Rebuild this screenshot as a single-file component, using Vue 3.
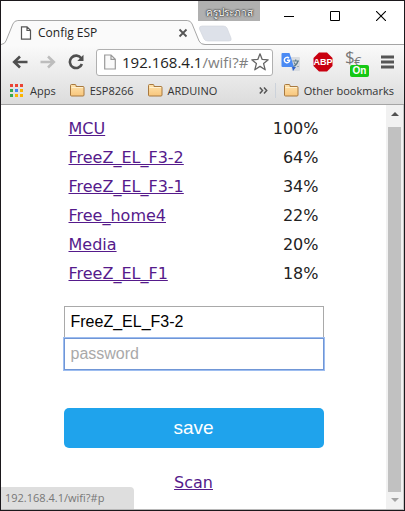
<script setup>
import { ref } from 'vue'

const networks = [
  { name: 'MCU', signal: 100 },
  { name: 'FreeZ_EL_F3-2', signal: 64 },
  { name: 'FreeZ_EL_F3-1', signal: 34 },
  { name: 'Free_home4', signal: 22 },
  { name: 'Media', signal: 20 },
  { name: 'FreeZ_EL_F1', signal: 18 },
]
const appColors = ['#ea4335', '#ea4335', '#ea4335', '#34a853', '#4285f4', '#fbb400', '#34a853', '#fbb400', '#fbb400']
const folders = ['ESP8266', 'ARDUINO']
const ssid = ref('FreeZ_EL_F3-2')
const password = ref('')
</script>

<template>
  <div class="window">
    <svg class="defs" aria-hidden="true">
      <defs>
        <linearGradient id="folder-fill" x1="0" y1="0" x2="0" y2="1">
          <stop offset="0" stop-color="#fee2ac" />
          <stop offset="1" stop-color="#f8c67c" />
        </linearGradient>
        <symbol id="folder" viewBox="0 0 16 14">
          <path d="M1.500 12V2.500Q1.500 1.500 2.500 1.500H6Q7 1.500 7 2.500V3.500H14Q15 3.500 15 4.500V12Q15 13 14 13H2.500Q1.500 13 1.500 12Z" fill="url(#folder-fill)" stroke="#a8793f" />
          <path d="M2.500 4.500H14" stroke="#fff0ce" />
        </symbol>
      </defs>
    </svg>

    <header class="strip">
      <div class="tab">
        <svg class="tab-shape" viewBox="0 0 206 25" preserveAspectRatio="none" aria-hidden="true">
          <path d="M0 24.500Q4 24 5 21L12 4Q13.500 .500 17 .500H188Q191.500 .500 193 4L200 21Q201.500 24.500 206 24.500V25H0Z" fill="#fafafa" />
          <path d="M0 24.500Q4 24 5 21L12 4Q13.500 .500 17 .500H188Q191.500 .500 193 4L200 21Q201.500 24.500 206 24.500" fill="none" stroke="#a5a5a5" />
        </svg>
        <div class="tab-content">
          <svg width="12" height="14" viewBox="0 0 12 14" aria-hidden="true">
            <path d="M1.500 .800H7L10.500 4.300V13.200H1.500ZM7 .800V4.500H10.500" fill="#fff" stroke="#555" stroke-width="1.200" />
          </svg>
          <span class="tab-title">Config ESP</span>
          <button class="plain" aria-label="Close tab">
            <svg width="10" height="10" viewBox="0 0 10 10"><path d="M1.500 1.500L8.500 8.500M8.500 1.500L1.500 8.500" stroke="#555" stroke-width="1.800" /></svg>
          </button>
        </div>
      </div>
      <button class="plain new-tab" aria-label="New tab">
        <svg width="34" height="18" viewBox="0 0 34 18"><path d="M4 1H25Q28 1 29 3L33 13Q34 16 31 16H10Q7 16 6 14L1.500 4Q1 1 4 1Z" fill="#dde1e9" stroke="#d0d4dc" stroke-width=".6" /></svg>
      </button>
      <span class="watermark">ครูประภาส</span>
      <div class="controls">
        <button class="plain" aria-label="Minimize"><svg width="10" height="10" viewBox="0 0 10 10"><path d="M0 5.500H10" stroke="#000" /></svg></button>
        <button class="plain" aria-label="Maximize"><svg width="10" height="10" viewBox="0 0 10 10"><path d="M.500 .500H9.500V9.500H.500Z" fill="none" stroke="#000" /></svg></button>
        <button class="plain" aria-label="Close"><svg width="10" height="10" viewBox="0 0 10 10"><path d="M0 0L10 10M10 0L0 10" stroke="#000" stroke-width="1.100" /></svg></button>
      </div>
    </header>

    <div class="chrome">
      <div class="toolbar">
        <button class="plain" aria-label="Back">
          <svg width="16" height="14" viewBox="0 0 16 14"><path d="M15.500 7H3M8 1.500L2.200 7L8 12.500" fill="none" stroke="#4f4f4f" stroke-width="2.600" /></svg>
        </button>
        <button class="plain" aria-label="Forward" disabled>
          <svg width="16" height="14" viewBox="0 0 16 14"><path d="M.500 7H13M8 1.500L13.800 7L8 12.500" fill="none" stroke="#bdbdbd" stroke-width="2.600" /></svg>
        </button>
        <button class="plain" aria-label="Reload">
          <svg width="16" height="16" viewBox="0 0 16 16"><path d="M13.200 4.300A6.200 6.200 0 1 0 13.900 10" fill="none" stroke="#4f4f4f" stroke-width="2.600" /><path d="M15.500 .800V7H9.300Z" fill="#4f4f4f" /></svg>
        </button>
        <div class="omnibox">
          <svg width="12" height="16" viewBox="0 0 12 16" aria-hidden="true"><path d="M.700 1H7L11.300 5.300V15H.700ZM7 1V5.300H11.300" fill="#fafafa" stroke="#999" stroke-width="1.200" /></svg>
          <span class="url">192.168.4.1<span class="path">/wifi?#</span></span>
          <button class="plain" aria-label="Bookmark this page">
            <svg width="18" height="18" viewBox="0 0 18 18"><path d="M9 .800L11.200 6.400L17.200 6.800L12.600 10.600L14.200 16.800L9 13.400L3.800 16.800L5.400 10.600L.800 6.800L6.800 6.400Z" fill="#fff" stroke="#666" stroke-width="1.300" stroke-linejoin="round" /></svg>
          </button>
        </div>
        <div class="extensions">
          <button class="plain" aria-label="Translate">
            <svg width="20" height="20" viewBox="0 0 20 20">
              <path d="M8 5H18Q19 5 19 6V18Q19 19 18 19H11Z" fill="#d9dce0" />
              <path d="M11 15H15L12 19Z" fill="#2f62c9" />
              <path d="M1.500 1H8.500L13 15H1.500Q.500 15 .500 14V2Q.500 1 1.500 1Z" fill="#4a8af4" />
              <path d="M11.500 9H18M14.700 7.500V9M17 9Q16 13 12.500 14.500M13 10.500Q14.500 13.500 17.500 14.500" fill="none" stroke="#607d8b" stroke-width="1.200" />
              <path d="M8 6.200A2.700 2.700 0 1 0 8.700 8.200H6" fill="none" stroke="#fff" stroke-width="1.400" />
            </svg>
          </button>
          <button class="plain" aria-label="Adblock Plus">
            <span class="abp">
              <svg width="20" height="20" viewBox="0 0 20 20"><path d="M6 .500H14L19.500 6V14L14 19.500H6L.500 14V6Z" fill="#c90010" /></svg>
              <span>ABP</span>
            </span>
          </button>
          <button class="plain currency" aria-label="Currency converter">
            <span class="dollar">$</span><span class="euro">€</span><span class="on">On</span>
          </button>
          <button class="plain" aria-label="Menu">
            <svg width="13" height="14" viewBox="0 0 13 14"><path d="M0 2H13M0 7H13M0 12H13" stroke="#555" stroke-width="3" /></svg>
          </button>
        </div>
      </div>

      <nav class="bookmarks">
        <a href="#apps" class="mark apps">
          <span class="app-grid"><i v-for="(c, n) in appColors" :key="n" :style="{ background: c }"></i></span>Apps
        </a>
        <a v-for="f in folders" :key="f" href="#folder" class="mark folder">
          <svg width="16" height="14"><use href="#folder" /></svg>{{ f }}
        </a>
        <button class="plain more" aria-label="More bookmarks">
          <svg width="9" height="7" viewBox="0 0 9 7"><path d="M.800 .500L3.500 3.500L.800 6.500M5 .500L7.700 3.500L5 6.500" fill="none" stroke="#555" stroke-width="1.500" /></svg>
        </button>
        <a href="#other" class="mark other">
          <svg width="16" height="14"><use href="#folder" /></svg>Other bookmarks
        </a>
      </nav>
    </div>

    <div class="viewport">
      <main class="page">
        <div class="column">
          <table class="networks">
            <tbody>
              <tr v-for="n in networks" :key="n.name">
                <td><a href="#p" @click="ssid = n.name">{{ n.name }}</a></td>
                <td class="signal">{{ n.signal }}%</td>
              </tr>
            </tbody>
          </table>
          <form class="form" @submit.prevent>
            <input v-model="ssid" type="text" aria-label="SSID">
            <input v-model="password" type="password" class="active" aria-label="password" placeholder="password">
            <button type="submit" class="save">save</button>
          </form>
          <a href="#scan" class="scan">Scan</a>
        </div>
      </main>
      <div class="scrollbar" aria-hidden="true">
        <svg width="8" height="4" viewBox="0 0 8 4"><path d="M0 4L4 0L8 4Z" fill="#505050" /></svg>
        <div class="thumb"></div>
        <svg width="8" height="4" viewBox="0 0 8 4"><path d="M0 0L4 4L8 0Z" fill="#a3a3a3" /></svg>
      </div>
      <div class="status">192.168.4.1/wifi?#p</div>
    </div>
  </div>
</template>

<style>
body {
  margin: 0;
}
</style>

<style scoped>
* {
  box-sizing: border-box;
}
.window {
  display: flex;
  flex-direction: column;
  min-height: 100vh;
  border: 1px solid #1b181c;
  background: #fff;
  font-family: "Open Sans", "Noto Sans", sans-serif;
  font-size: 12px;
  color: #222;
}
.defs {
  position: absolute;
  width: 0;
  height: 0;
}
svg {
  display: block;
  flex: none;
}
.plain {
  display: block;
  flex: none;
  padding: 0;
  border: 0;
  background: none;
  font: inherit;
}
.strip {
  position: relative;
  display: flex;
  align-items: flex-end;
  height: 44px;
  box-shadow: inset 0 -1px #a5a5a5;
}
.tab {
  display: grid;
  flex: 0 0 204px;
  height: 25px;
}
.tab-shape,
.tab-content {
  grid-area: 1 / 1;
}
.tab-shape {
  width: 100%;
  height: 25px;
}
.tab-content {
  display: flex;
  align-items: center;
  padding: 0 17px 0 19px;
}
.tab-title {
  flex: 1;
  margin-left: 6px;
}
.new-tab {
  align-self: flex-end;
  margin: 0 0 2px -7px;
}
.watermark {
  position: absolute;
  top: 0;
  left: 197px;
  width: 62px;
  height: 20px;
  background: #b0b0b0;
  color: #fff;
  font-size: 10px;
  line-height: 22px;
  text-align: center;
  white-space: nowrap;
  text-shadow: 0 0 1px #333, 0 0 2px #333, 0 0 2px #333;
}
.controls {
  display: flex;
  gap: 36px;
  margin: 0 18px 24px auto;
}
.chrome {
  border-bottom: 1px solid #a5a5a5;
  background: linear-gradient(#fafafa, #dcdcdc);
}
.toolbar {
  display: flex;
  align-items: center;
  height: 34px;
  padding: 0 10px 0 11px;
  gap: 12px;
}
.omnibox {
  display: flex;
  flex: 1;
  align-items: center;
  min-width: 0;
  height: 27px;
  margin-right: -4px;
  padding: 0 3px 0 7px;
  border: 1px solid #b0b0b0;
  border-radius: 3px;
  background: #fff;
}
.url {
  flex: 1;
  min-width: 0;
  overflow: hidden;
  margin-left: 6px;
  font-size: 15px;
  line-height: 24px;
  white-space: nowrap;
}
.path {
  color: #808080;
}
.extensions {
  display: flex;
  align-items: center;
  gap: 12px;
}
.abp {
  display: grid;
  place-items: center;
}
.abp > * {
  grid-area: 1 / 1;
}
.abp span {
  color: #fff;
  font-family: "Liberation Sans", sans-serif;
  font-size: 9px;
  font-weight: bold;
}
.currency {
  position: relative;
  width: 24px;
  height: 24px;
  color: #777;
}
.dollar,
.euro,
.on {
  position: absolute;
}
.dollar {
  top: -3px;
  left: 0;
  font-size: 17px;
  line-height: 20px;
}
.euro {
  top: 4px;
  left: 9px;
  font-size: 13px;
  line-height: 14px;
}
.on {
  right: 0;
  bottom: -3px;
  width: 19px;
  height: 12px;
  border-radius: 2px;
  background: #14c814;
  color: #fff;
  font-family: "Liberation Sans", sans-serif;
  font-size: 10px;
  font-weight: bold;
  line-height: 12px;
}
.bookmarks {
  display: flex;
  align-items: center;
  height: 25px;
  padding: 0 10px 3px 9px;
  font-size: 11px;
}
.mark {
  display: flex;
  align-items: center;
  gap: 5px;
  color: #333;
  text-decoration: none;
  white-space: nowrap;
}
.apps {
  gap: 7px;
}
.folder {
  margin-left: 13px;
}
.app-grid {
  display: grid;
  grid-template-columns: repeat(3, 3px);
  grid-auto-rows: 3px;
  gap: 2px;
}
.more {
  margin-left: auto;
}
.other {
  margin-left: 7px;
  padding-left: 7px;
  border-left: 1px solid #ccd2da;
}
.viewport {
  position: relative;
  display: flex;
  flex: 1;
  border-right: 1px solid #c8c8c8;
  border-bottom: 1px solid #b8b8b8;
}
.page {
  flex: 1;
  padding: 9px 16px 16px;
  font-family: Verdana, "DejaVu Sans", sans-serif;
  font-size: 16px;
}
.column {
  max-width: 260px;
  margin: 0 auto;
  text-align: center;
}
.networks {
  width: 100%;
  border-collapse: collapse;
  text-align: left;
}
.networks td {
  height: 29px;
  padding: 0 5px;
  line-height: 20px;
}
.networks .signal {
  text-align: right;
}
.page a {
  color: #551a8b;
  text-decoration-thickness: 1px;
  text-decoration-skip-ink: none;
}
.form {
  display: flex;
  flex-direction: column;
  margin: 18px 0 25px;
}
.form input {
  width: 100%;
  height: 32px;
  padding: 0 6px;
  border: 1px solid #a9a9a9;
  border-radius: 0;
  background: #fff;
  color: #000;
  font-family: "Liberation Sans", Arial, sans-serif;
  font-size: 16px;
}
.form .active {
  border-color: #7096d6;
  outline: none;
  box-shadow: 0 0 0 1px #9dbdf0;
}
.form input::placeholder {
  color: #a9a9a9;
}
.save {
  height: 40px;
  margin-top: 38px;
  border: 0;
  border-radius: 5px;
  background: #1fa3ec;
  color: #fff;
  font-family: "Liberation Sans", Arial, sans-serif;
  font-size: 19px;
}
.scan {
  line-height: 20px;
}
.scrollbar {
  display: flex;
  flex-direction: column;
  align-items: center;
  width: 17px;
  padding: 7px 0;
  background: #f1f1f1;
}
.thumb {
  flex: 1;
  width: 13px;
  margin: 11px 0 6px;
  background: #c1c1c1;
}
.status {
  position: absolute;
  bottom: 0;
  left: 0;
  width: 133px;
  height: 22px;
  padding-left: 4px;
  border-radius: 0 4px 0 0;
  background: #dedede;
  color: #777;
  font-size: 11px;
  line-height: 22px;
}
</style>
